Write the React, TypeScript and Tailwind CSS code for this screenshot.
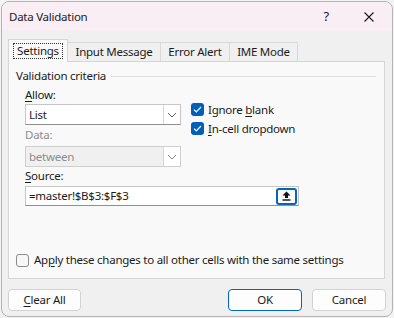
import React from "react";

const font = {
  fontFamily: '"Noto Sans", "Open Sans", Arial, sans-serif',
  fontSize: "11.5px",
  letterSpacing: "-0.25px",
};

function Chevron({ muted = false }: { muted?: boolean }) {
  return (
    <svg width="10" height="6" viewBox="0 0 10 6" fill="none">
      <path
        d="M1 1l4 4 4-4"
        stroke={muted ? "#8a8a8a" : "#5c5c5c"}
        strokeWidth="1"
      />
    </svg>
  );
}

function Check({ checked }: { checked: boolean }) {
  if (!checked) {
    return (
      <span className="block h-[13px] w-[13px] shrink-0 rounded-[3px] border border-[#8c8c8c] bg-[#f7f7f7]" />
    );
  }
  return (
    <span className="flex h-[13px] w-[13px] shrink-0 items-center justify-center rounded-[3px] bg-[#005fb8]">
      <svg width="9" height="7" viewBox="0 0 9 7" fill="none">
        <path d="M1 3.6l2.3 2.2L8 1" stroke="#ffffff" strokeWidth="1.2" />
      </svg>
    </span>
  );
}

function Select({ value, disabled = false }: { value: string; disabled?: boolean }) {
  return (
    <div
      className={
        "flex h-[21px] w-[156px] border " +
        (disabled
          ? "border-[#cfcfcf] bg-[#f0f0f0] text-[#8d8d8d]"
          : "border-[#c6c6c6] border-b-[#8f8f8f] bg-white text-[#1b1b1b]")
      }
    >
      <span className="flex-1 pl-[3px] leading-[19px]">{value}</span>
      <span className="flex w-[17px] items-center justify-center border-l border-[#d6d6d6] bg-white">
        <Chevron muted={disabled} />
      </span>
    </div>
  );
}

export default function App() {
  return (
    <div className="h-[318px] w-[394px] bg-[#f3f3f3] p-[1px] text-[#1b1b1b]" style={font}>
      <div className="flex h-[316px] w-[392px] flex-col overflow-hidden rounded-[8px] border border-[#b4b4b4] bg-[#f0f0f0]">
        {/* title bar */}
        <div className="flex h-[29px] shrink-0 items-center bg-[#f8eef3] pl-[7px]">
          <span>Data Validation</span>
          <span className="ml-auto mr-[35px] text-[13px] leading-none">?</span>
          <svg width="10" height="10" viewBox="0 0 10 10" className="mr-[18px]">
            <path d="M0.5 0.5l9 9M9.5 0.5l-9 9" stroke="#1b1b1b" strokeWidth="1.1" />
          </svg>
        </div>

        <div className="flex flex-1 flex-col px-[6px] pt-[7px]">
          {/* tabs */}
          <div className="relative z-10 flex h-[23px] items-end">
            <div className="-mb-px flex h-[23px] w-[60px] items-center justify-center border border-b-0 border-[#d6d6d6] bg-[#f9f9f9]">
              <span className="border border-dotted border-[#333] px-[3px] leading-[14px]">Settings</span>
            </div>
            <div className="flex h-[19px] w-[93px] items-center justify-center border border-l-0 border-b-0 border-[#d9d9d9] bg-[#f0f0f0]">
              Input Message
            </div>
            <div className="flex h-[19px] w-[69px] items-center justify-center border border-l-0 border-b-0 border-[#d9d9d9] bg-[#f0f0f0]">
              Error Alert
            </div>
            <div className="flex h-[19px] w-[68px] items-center justify-center border border-l-0 border-b-0 border-[#d9d9d9] bg-[#f0f0f0]">
              IME Mode
            </div>
          </div>

          {/* panel */}
          <div className="flex h-[218px] w-[377px] flex-col border border-[#d6d6d6] bg-[#f9f9f9] px-[7px] pt-[6px] pb-[11px]">
            <div className="flex items-center">
              <span className="leading-[16px]">Validation criteria</span>
              <span className="ml-[5px] mr-[1px] h-px flex-1 bg-[#dcdcdc]" />
            </div>

            <div className="pl-[9px]">
              <div className="mt-[3px] flex">
                <div className="flex flex-col">
                  <div className="leading-[16px]">
                    <span className="underline underline-offset-2">A</span>llow:
                  </div>
                  <div className="mt-[1px]">
                    <Select value="List" />
                  </div>
                  <div className="mt-[2px] leading-[16px] text-[#8d8d8d]">Data:</div>
                  <div className="mt-[3px]">
                    <Select value="between" disabled />
                  </div>
                </div>
                <div className="ml-[10px] flex flex-col gap-[6px] pt-[16px]">
                  <div className="flex items-center gap-[4px]">
                    <Check checked />
                    <span className="leading-[13px]">
                      Ignore <span className="underline underline-offset-2">b</span>lank
                    </span>
                  </div>
                  <div className="flex items-center gap-[4px]">
                    <Check checked />
                    <span className="leading-[13px]">
                      <span className="underline underline-offset-2">I</span>n-cell dropdown
                    </span>
                  </div>
                </div>
              </div>
              <div className="mt-[1px] leading-[16px]">
                <span className="underline underline-offset-2">S</span>ource:
              </div>
              <div className="mt-[2px] flex h-[20px] w-[274px] items-center border border-[#c6c6c6] border-b-[#8f8f8f] bg-white pr-[1px]">
                <span className="flex-1 pl-[3px] leading-[18px]">=master!$B$3:$F$3</span>
                <span className="flex h-[17px] w-[21px] items-center justify-center rounded-[3px] border-[2px] border-[#0067c0] bg-[#fbfbfb]">
                  <svg width="9" height="10" viewBox="0 0 9 10">
                    <path d="M4.5 0.5L8.5 4.5H6V7H3V4.5H0.5Z" fill="#111" />
                    <rect x="0.5" y="8.3" width="8" height="1.4" fill="#111" />
                  </svg>
                </span>
              </div>
            </div>

            <div className="mt-auto flex items-center gap-[5px]">
              <Check checked={false} />
              <span className="leading-[14px]">
                Ap<span className="underline underline-offset-2">p</span>ly these changes to all other cells with the same settings
              </span>
            </div>
          </div>

          {/* buttons */}
          <div className="mt-[10px] flex">
            <button className="h-[22px] w-[73px] rounded-[4px] border border-[#d2d2d2] bg-[#fdfdfd] leading-none">
              <span className="underline underline-offset-2">C</span>lear All
            </button>
            <button className="ml-auto h-[22px] w-[74px] rounded-[4px] border border-[#0067c0] bg-[#fdfdfd] leading-none">
              OK
            </button>
            <button className="ml-[10px] h-[22px] w-[74px] rounded-[4px] border border-[#d2d2d2] bg-[#fdfdfd] leading-none">
              Cancel
            </button>
          </div>
        </div>
      </div>
    </div>
  );
}
